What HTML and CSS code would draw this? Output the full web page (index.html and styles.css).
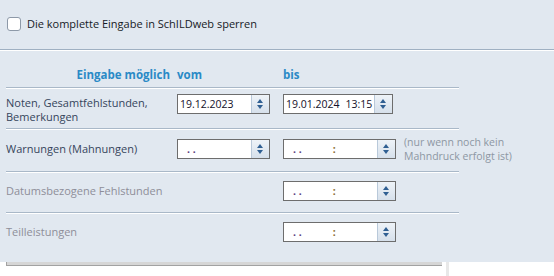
FILE: index.html
```html
<!DOCTYPE html>
<html lang="de">
<head>
  <meta charset="UTF-8">
  <title>Eingabezeiträume</title>
  <link rel="stylesheet" href="styles.css">
</head>
<body>
  <div class="panel">
    <label class="lock">
      <span class="check"></span>
      Die komplette Eingabe in SchILDweb sperren
    </label>
    <div class="rule"></div>

    <div class="table">
      <div class="row head">
        <span class="caption">Eingabe möglich</span>
        <span>vom</span>
        <span>bis</span>
      </div>

      <div class="row first">
        <span class="label">Noten, Gesamtfehlstunden,<br>Bemerkungen</span>
        <div class="field short"><span class="value">19.12.2023</span><span class="spin"></span></div>
        <div class="field"><span class="value">19.01.2024<span class="time">13:15</span></span><span class="spin"></span></div>
      </div>

      <div class="row second">
        <span class="label">Warnungen (Mahnungen)</span>
        <div class="field short"><span class="value blank">. .</span><span class="spin"></span></div>
        <div class="field wide"><span class="value blank">. .<span class="colon">:</span></span><span class="spin"></span></div>
        <span class="note">(nur wenn noch kein<br>Mahndruck erfolgt ist)</span>
      </div>

      <div class="row third">
        <span class="label off">Datumsbezogene Fehlstunden</span>
        <span></span>
        <div class="field wide"><span class="value blank">. .<span class="colon">:</span></span><span class="spin"></span></div>
      </div>

      <div class="row fourth">
        <span class="label off">Teilleistungen</span>
        <span></span>
        <div class="field wide"><span class="value blank">. .<span class="colon">:</span></span><span class="spin"></span></div>
      </div>
    </div>
  </div>

  <div class="footer">
    <div class="grip"></div>
    <div class="edge"></div>
  </div>
</body>
</html>
```

FILE: styles.css
```css
body { margin: 0; background: #fff; font-family: "Open Sans", "Noto Sans", sans-serif; font-size: 11px; color: #1c2230; }

.panel { background: #e1e8f0; height: 262px; padding-top: 16px; box-sizing: border-box; }

.lock { display: flex; align-items: center; gap: 6px; margin-left: 7px; height: 15px; font-size: 11px; color: #161a26; }
.check { width: 12px; height: 12px; border: 1px solid #8d99a8; border-radius: 3px; background: #fff; }

.rule { margin-top: 18px; border-top: 1px solid #9fb0c2; border-bottom: 1px solid #fff; }

.table { margin-left: 6px; width: 453px; }
.row { display: grid; grid-template-columns: 171px 106px 121px 1fr; align-items: center; border-top: 1px solid #a9b8c8; box-shadow: inset 0 1px #fff; box-sizing: border-box; }
.head { border: none; box-shadow: none; height: 36px; align-items: end; padding-bottom: 5px; font-weight: bold; color: #2a8ac6; font-size: 11.5px; }
.head .caption { text-align: right; padding-right: 7px; }
.first { height: 41px; align-items: start; padding-top: 6px; }
.first .label { margin-top: 2px; }
.second { height: 43px; padding-bottom: 2px; }
.third { height: 41px; padding-bottom: 2px; }
.fourth { height: 41px; padding-bottom: 2px; }

.label { color: #36455c; line-height: 14px; }
.label.off { color: #8e8e99; }
.note { color: #8d97a3; line-height: 14px; white-space: nowrap; font-size: 10.5px; }

.field { display: flex; width: 110px; height: 20px; border: 1px solid #6d6d6d; background: #fff; box-sizing: border-box; }
.field.short { width: 93px; }
.field.wide { width: 113px; }
.value { flex: 1; padding-left: 2px; line-height: 18px; font-size: 10.5px; color: #14102a; white-space: nowrap; overflow: hidden; }
.time { margin-left: 6px; }
.value.blank { padding-left: 9px; color: #5a3c7c; font-weight: bold; }
.colon { margin-left: 31px; color: #8a6a30; }
.spin { width: 17px; border-left: 1px solid #b9c9da; background: linear-gradient(#eef3f8, #d6e0eb); position: relative; }
.spin::before, .spin::after { content: ""; position: absolute; left: 5px; border-left: 3.5px solid transparent; border-right: 3.5px solid transparent; }
.spin::before { top: 4px; border-bottom: 4px solid #2f5f92; }
.spin::after { top: 10px; border-top: 4px solid #2f5f92; }

.footer { display: flex; align-items: flex-start; gap: 4px; margin-left: 6px; height: 14px; }
.grip { width: 436px; height: 4px; background: #d6d6d6; border-left: 1px solid #a2a2a2; border-bottom: 1px solid #a2a2a2; box-sizing: border-box; }
.edge { width: 3px; height: 14px; background: #e8e8e8; }
```
